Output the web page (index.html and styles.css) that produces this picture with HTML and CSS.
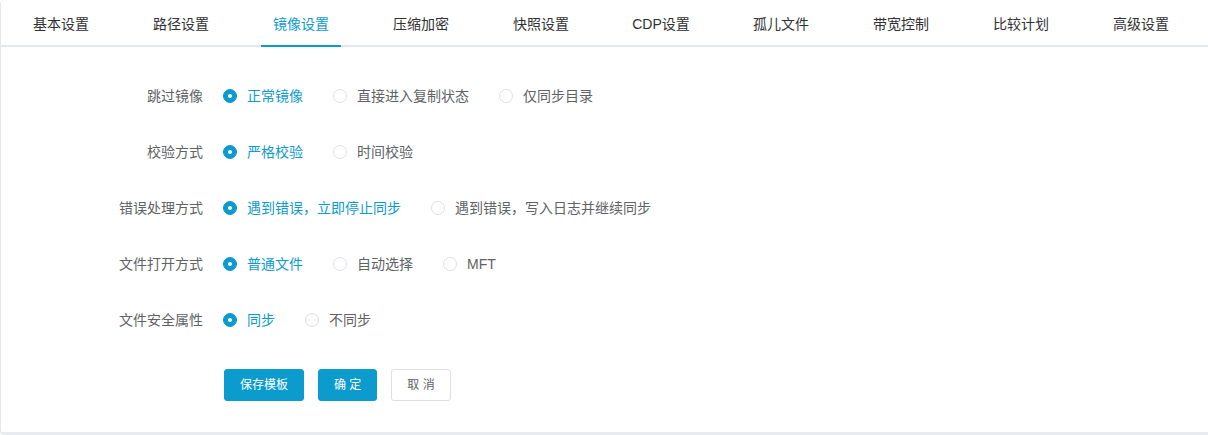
FILE: index.html
```html
<!DOCTYPE html>
<html lang="zh-CN">
<head>
<meta charset="utf-8">
<title>镜像设置</title>
<link rel="stylesheet" href="styles.css">
</head>
<body>
<div class="card">
  <div class="tabs">
    <div class="tab"><span>基本设置</span></div>
    <div class="tab"><span>路径设置</span></div>
    <div class="tab active"><span>镜像设置</span></div>
    <div class="tab"><span>压缩加密</span></div>
    <div class="tab"><span>快照设置</span></div>
    <div class="tab"><span>CDP设置</span></div>
    <div class="tab"><span>孤儿文件</span></div>
    <div class="tab"><span>带宽控制</span></div>
    <div class="tab"><span>比较计划</span></div>
    <div class="tab"><span>高级设置</span></div>
  </div>
  <form class="form">
    <div class="row">
      <div class="label">跳过镜像</div>
      <div class="options">
        <label class="radio checked"><span class="circle"></span><span class="text">正常镜像</span></label>
        <label class="radio"><span class="circle"></span><span class="text">直接进入复制状态</span></label>
        <label class="radio"><span class="circle"></span><span class="text">仅同步目录</span></label>
      </div>
    </div>
    <div class="row">
      <div class="label">校验方式</div>
      <div class="options">
        <label class="radio checked"><span class="circle"></span><span class="text">严格校验</span></label>
        <label class="radio"><span class="circle"></span><span class="text">时间校验</span></label>
      </div>
    </div>
    <div class="row">
      <div class="label">错误处理方式</div>
      <div class="options">
        <label class="radio checked"><span class="circle"></span><span class="text">遇到错误，立即停止同步</span></label>
        <label class="radio"><span class="circle"></span><span class="text">遇到错误，写入日志并继续同步</span></label>
      </div>
    </div>
    <div class="row">
      <div class="label">文件打开方式</div>
      <div class="options">
        <label class="radio checked"><span class="circle"></span><span class="text">普通文件</span></label>
        <label class="radio"><span class="circle"></span><span class="text">自动选择</span></label>
        <label class="radio"><span class="circle"></span><span class="text">MFT</span></label>
      </div>
    </div>
    <div class="row">
      <div class="label">文件安全属性</div>
      <div class="options">
        <label class="radio checked"><span class="circle"></span><span class="text">同步</span></label>
        <label class="radio"><span class="circle"></span><span class="text">不同步</span></label>
      </div>
    </div>
    <div class="actions">
      <button type="button" class="btn primary">保存模板</button>
      <button type="button" class="btn primary">确 定</button>
      <button type="button" class="btn plain">取 消</button>
    </div>
  </form>
</div>
</body>
</html>
```
FILE: styles.css
```css
* { box-sizing: border-box; }
html, body { margin: 0; padding: 0; background: #ffffff; }
body {
  font-family: "Liberation Sans", "Noto Sans CJK SC", sans-serif;
  font-size: 14px;
  color: #606266;
  width: 1208px;
  height: 435px;
  overflow: hidden;
}
.card {
  width: 1220px;
  height: 435px;
  background: #fff;
  border-left: 1px solid #e3e7ec;
  border-bottom: 3px solid #e8ecf0;
  border-radius: 4px 0 0 4px;
}
.tabs {
  display: flex;
  border-bottom: 2px solid #e4e7ed;
}
.tab {
  width: 120px;
  display: flex;
  justify-content: center;
  color: #303133;
}
.tab span {
  display: block;
  box-sizing: content-box;
  height: 41px;
  line-height: 41px;
  padding: 4px 12px 0;
  margin-bottom: -2px;
  border-bottom: 2px solid transparent;
}
.tab.active span {
  color: #0b9bcd;
  border-bottom-color: #0b9bcd;
}
.form {
  padding-top: 29px;
}
.row {
  display: flex;
  align-items: center;
  height: 40px;
  margin-bottom: 16px;
}
.label {
  width: 202px;
  margin-right: 20px;
  text-align: right;
  color: #606266;
  line-height: 40px;
}
.options {
  display: flex;
  align-items: center;
}
.radio {
  display: flex;
  align-items: center;
  margin-right: 30px;
  cursor: pointer;
}
.circle {
  width: 14px;
  height: 14px;
  border-radius: 50%;
  border: 1px solid #dcdfe6;
  background: #fff;
  position: relative;
  flex: none;
}
.radio.checked .circle {
  background: #0b9bcd;
  border-color: #0b9bcd;
}
.radio.checked .circle::after {
  content: "";
  position: absolute;
  left: 50%;
  top: 50%;
  width: 4px;
  height: 4px;
  margin: -2px 0 0 -2px;
  border-radius: 50%;
  background: #fff;
}
.text {
  padding-left: 10px;
  line-height: 20px;
  color: #606266;
}
.radio.checked .text {
  color: #0b9bcd;
}
.actions {
  display: flex;
  gap: 14px;
  margin-left: 223px;
  padding-top: 13px;
}
.btn {
  height: 32px;
  padding: 0 15px;
  font-family: "Liberation Sans", "Noto Sans CJK SC", sans-serif;
  font-size: 12px;
  line-height: 30px;
  border-radius: 3px;
  border: 1px solid #dcdfe6;
  cursor: pointer;
}
.btn.primary {
  background: #0b9bcd;
  border-color: #0b9bcd;
  color: #fff;
}
.btn.plain {
  background: #fff;
  color: #606266;
}
```
